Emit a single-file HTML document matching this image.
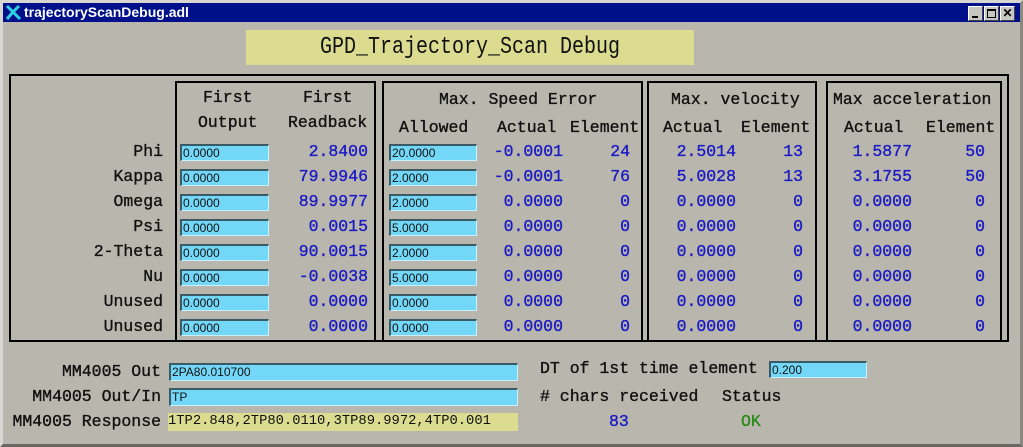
<!DOCTYPE html>
<html><head><meta charset="utf-8"><style>
*{margin:0;padding:0;box-sizing:border-box}
body{width:1023px;height:447px;overflow:hidden;background:#b9b6ad;position:relative;font-family:"Liberation Mono",monospace}
.a{position:absolute}
.t{position:absolute;font-size:16.5px;line-height:20px;white-space:pre;color:#111;-webkit-text-stroke:0.35px currentColor}
.v{color:#1a1ac4}
.box{position:absolute;border:2px solid #000}
.in{position:absolute;background:#73d8f8;border-top:2px solid #3a5a66;border-left:2px solid #3a5a66;border-bottom:1px solid #c8f0ff;border-right:1px solid #c8f0ff;font:12px "Liberation Sans",sans-serif;line-height:15px;padding-left:1px;color:#111;height:17px}
</style></head><body>
<div class="a" style="left:0;top:0;width:1023px;height:447px;border:3px solid #d8d6d0;border-right-color:#8a8880;border-bottom-color:#6a6860"></div>
<div class="a" style="left:3px;top:3px;width:1017px;height:19px;background:#00108a"></div>
<svg class="a" style="left:5px;top:4px" width="18" height="17"><path d="M2 2 L8 8 L2 15 M14 2 L8 8 L15 15" stroke="#30d0e0" stroke-width="3" fill="none"/></svg>
<div class="a" style="left:24px;top:3px;font:bold 14px 'Liberation Sans',sans-serif;line-height:19px;color:#fff">trajectoryScanDebug.adl</div>
<div class="a" style="left:968px;top:6px;width:48px;height:15px;display:flex;gap:1px">
<div style="width:15px;height:15px;background:#c8c6c0;border:1px solid #fff;border-right-color:#444;border-bottom-color:#444;position:relative"><div class="a" style="left:3px;top:9px;width:6px;height:2px;background:#000"></div></div>
<div style="width:15px;height:15px;background:#c8c6c0;border:1px solid #fff;border-right-color:#444;border-bottom-color:#444;position:relative"><div class="a" style="left:2px;top:2px;width:9px;height:9px;border:1px solid #000;border-top-width:2px"></div></div>
<div style="width:15px;height:15px;background:#c8c6c0;border:1px solid #fff;border-right-color:#444;border-bottom-color:#444;font:bold 12px 'Liberation Sans';line-height:13px;text-align:center">✕</div>
</div>

<div class="a" style="left:246px;top:30px;width:448px;height:35px;background:#dcdc90"></div>
<div class="a" style="left:246px;top:30px;width:448px;height:35px;text-align:center;font:20px 'Liberation Mono',monospace;line-height:35px;transform:scaleY(1.2);color:#111">GPD_Trajectory_Scan Debug</div>

<div class="box" style="left:9px;top:74px;width:1000px;height:268px"></div>
<div class="box" style="left:175px;top:81px;width:201px;height:261px"></div>
<div class="box" style="left:382px;top:81px;width:261px;height:261px"></div>
<div class="box" style="left:647px;top:81px;width:170px;height:261px"></div>
<div class="box" style="left:826px;top:81px;width:176px;height:261px"></div>

<div class="t" style="left:203px;top:88px">First</div>
<div class="t" style="left:303px;top:88px">First</div>
<div class="t" style="left:198px;top:113px">Output</div>
<div class="t" style="left:288px;top:113px">Readback</div>
<div class="t" style="left:439px;top:90px">Max. Speed Error</div>
<div class="t" style="left:399px;top:118px">Allowed</div>
<div class="t" style="left:497px;top:118px">Actual</div>
<div class="t" style="left:570px;top:118px">Element</div>
<div class="t" style="left:671px;top:90px">Max. velocity</div>
<div class="t" style="left:663px;top:118px">Actual</div>
<div class="t" style="left:741px;top:118px">Element</div>
<div class="t" style="left:833px;top:90px">Max acceleration</div>
<div class="t" style="left:844px;top:118px">Actual</div>
<div class="t" style="left:926px;top:118px">Element</div>

<div id="rows"></div>
<script>
var rows=[["Phi","2.8400","20.0000","-0.0001","24","2.5014","13","1.5877","50"],
["Kappa","79.9946","2.0000","-0.0001","76","5.0028","13","3.1755","50"],
["Omega","89.9977","2.0000","0.0000","0","0.0000","0","0.0000","0"],
["Psi","0.0015","5.0000","0.0000","0","0.0000","0","0.0000","0"],
["2-Theta","90.0015","2.0000","0.0000","0","0.0000","0","0.0000","0"],
["Nu","-0.0038","5.0000","0.0000","0","0.0000","0","0.0000","0"],
["Unused","0.0000","0.0000","0.0000","0","0.0000","0","0.0000","0"],
["Unused","0.0000","0.0000","0.0000","0","0.0000","0","0.0000","0"]];
var h="";
rows.forEach(function(r,i){var y=152+25*i,t=y-10;
function R(x,s,c){h+='<div class="t '+(c||'v')+'" style="right:'+(1023-x)+'px;top:'+t+'px">'+s+'</div>';}
R(163,r[0],'k');
h+='<div class="in" style="left:180px;top:'+(y-8)+'px;width:89px">0.0000</div>';
R(368,r[1]);
h+='<div class="in" style="left:389px;top:'+(y-8)+'px;width:88px">'+r[2]+'</div>';
R(563,r[3]);R(630,r[4]);R(736,r[5]);R(803,r[6]);R(912,r[7]);R(985,r[8]);});
document.getElementById('rows').innerHTML=h;
</script>

<div class="t" style="right:862px;top:362px">MM4005 Out</div>
<div class="in" style="left:169px;top:363px;width:349px;height:18px">2PA80.010700</div>
<div class="t" style="right:862px;top:387px">MM4005 Out/In</div>
<div class="in" style="left:169px;top:388px;width:349px;height:18px">TP</div>
<div class="t" style="right:862px;top:412px">MM4005 Response</div>
<div class="a" style="left:168px;top:413px;width:350px;height:18px;background:#dcdc90;font:13.8px 'Liberation Mono',monospace;line-height:18px;white-space:pre;overflow:hidden;color:#111">1TP2.848,2TP80.0110,3TP89.9972,4TP0.001</div>

<div class="t" style="left:540px;top:359px">DT of 1st time element</div>
<div class="in" style="left:769px;top:361px;width:98px;height:17px">0.200</div>
<div class="t" style="left:540px;top:387px"># chars received</div>
<div class="t" style="left:722px;top:387px">Status</div>
<div class="t v" style="left:609px;top:412px">83</div>
<div class="t" style="left:741px;top:412px;color:#2a8a1a">OK</div>
</body></html>
